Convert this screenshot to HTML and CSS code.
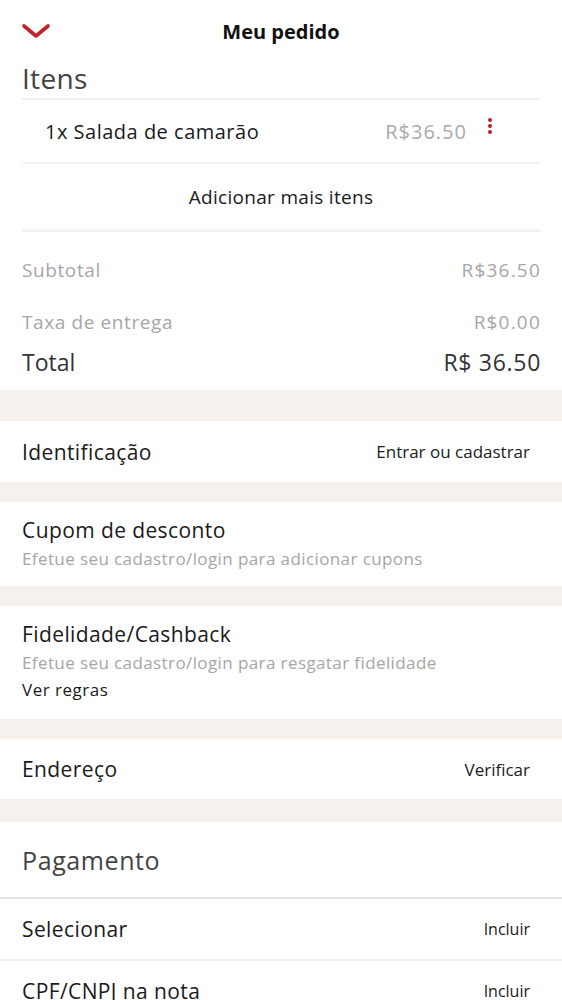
FILE: index.html
```html
<!DOCTYPE html>
<html lang="pt-BR">
<head>
<meta charset="utf-8">
<title>Meu pedido</title>
<link rel="stylesheet" href="styles.css">
</head>
<body>
<div class="page">
  <header class="topbar">
    <svg class="back" viewBox="0 0 30 16" width="30" height="16"><path d="M3 3 L15 13 L27 3" fill="none" stroke="#c0232b" stroke-width="3.6" stroke-linecap="round" stroke-linejoin="round"/></svg>
    <h1 class="title">Meu pedido</h1>
  </header>

  <section class="items">
    <h2 class="items-title">Itens</h2>
    <div class="item-row">
      <span class="item-name">1x Salada de camarão</span>
      <span class="item-price">R$36.50</span>
      <span class="kebab"><i></i><i></i><i></i></span>
    </div>
    <div class="add-more">Adicionar mais itens</div>
    <div class="sum-row muted first"><span>Subtotal</span><span class="val">R$36.50</span></div>
    <div class="sum-row muted"><span>Taxa de entrega</span><span class="val">R$0.00</span></div>
    <div class="sum-row total"><span>Total</span><span class="val">R$ 36.50</span></div>
  </section>

  <div class="gap g1"></div>
  <section class="card line">
    <span class="label">Identificação</span>
    <span class="action">Entrar ou cadastrar</span>
  </section>
  <div class="gap g2"></div>
  <section class="card block cupom">
    <span class="label">Cupom de desconto</span>
    <span class="sub">Efetue seu cadastro/login para adicionar cupons</span>
  </section>
  <div class="gap g2"></div>
  <section class="card block fid">
    <span class="label">Fidelidade/Cashback</span>
    <span class="sub">Efetue seu cadastro/login para resgatar fidelidade</span>
    <span class="rules">Ver regras</span>
  </section>
  <div class="gap g2"></div>
  <section class="card line addr">
    <span class="label">Endereço</span>
    <span class="action">Verificar</span>
  </section>
  <div class="gap g3"></div>
  <section class="pay">
    <div class="pay-title">Pagamento</div>
    <div class="pay-row"><span class="label">Selecionar</span><span class="action sm">Incluir</span></div>
    <div class="pay-row"><span class="label">CPF/CNPJ na nota</span><span class="action sm">Incluir</span></div>
  </section>
</div>
</body>
</html>
```

FILE: styles.css
```css
* { box-sizing: border-box; margin: 0; padding: 0; }
html, body { background: #fff; }
body { font-family: "Open Sans", "Noto Sans", sans-serif; color: #1a1a1a; width: 562px; overflow: hidden; }
.page { width: 562px; height: 1000px; overflow: hidden; }

.topbar { position: relative; height: 60px; display: flex; align-items: center; justify-content: center; }
.back { position: absolute; left: 21px; top: 23px; }
.title { font-size: 20px; font-weight: 700; color: #111; margin-top: 2px; }

.items { padding: 0 22px; }
.items-title { font-size: 28px; letter-spacing: 0.3px; font-weight: 400; color: #444; height: 40px; line-height: 36px; border-bottom: 2px solid #f1f1f1; }
.item-row { display: flex; align-items: center; height: 64px; border-bottom: 2px solid #f3f3f3; padding-left: 23px; }
.item-name { font-size: 20px; letter-spacing: 0.5px; flex: 1; color: #1a1a1a; }
.item-price { font-size: 20px; letter-spacing: 1px; color: #aaa; margin-right: 21px; }
.kebab { display: flex; flex-direction: column; gap: 2px; width: 4px; margin-right: 48px; margin-top: -10px; }
.kebab i { display: block; width: 4px; height: 4px; border-radius: 50%; background: #b81e27; }
.add-more { height: 68px; display: flex; align-items: center; justify-content: center; font-size: 19px; letter-spacing: 0.3px; color: #1a1a1a; border-bottom: 3px solid #f3f3f3; }
.sum-row { display: flex; justify-content: space-between; align-items: center; }
.sum-row.muted { font-size: 19px; letter-spacing: 0.6px; color: #a6a6a6; height: 52px; }
.sum-row.muted .val { letter-spacing: 1.2px; margin-right: -1px; }
.sum-row.first { margin-top: 12px; }
.sum-row.total { font-size: 23px; color: #333; height: 28px; margin-top: 0; margin-bottom: 14px; }
.sum-row.total .val { letter-spacing: 0.7px; margin-right: -1px; }

.gap { background: #f7f1ed; }
.g1 { height: 31px; }
.g2 { height: 20px; }
.g3 { height: 23px; border-top: 1px solid #eee; }

.card { background: #fff; padding: 0 32px 0 22px; }
.card.line { display: flex; justify-content: space-between; align-items: center; height: 61px; }
.card.addr { height: 60px; }
.label { font-size: 21px; letter-spacing: 0.4px; color: #1a1a1a; }
.action { font-size: 17px; color: #1a1a1a; }
.action.sm { font-size: 16px; }
.card.block { display: flex; flex-direction: column; }
.cupom { height: 84px; padding-top: 14px; }
.fid { height: 113px; padding-top: 14px; }
.sub { font-size: 17px; letter-spacing: 0.4px; color: #a6a6a6; margin-top: 3px; }
.rules { font-size: 17px; letter-spacing: 0.5px; color: #1a1a1a; margin-top: 4px; }

.pay-title { font-size: 25px; letter-spacing: 0.6px; color: #444; height: 77px; display: flex; align-items: center; padding-left: 22px; border-bottom: 2px solid #e4e4e4; }
.pay-row { display: flex; justify-content: space-between; align-items: center; height: 62px; padding: 0 32px 0 22px; border-bottom: 2px solid #f3f3f3; }
```
